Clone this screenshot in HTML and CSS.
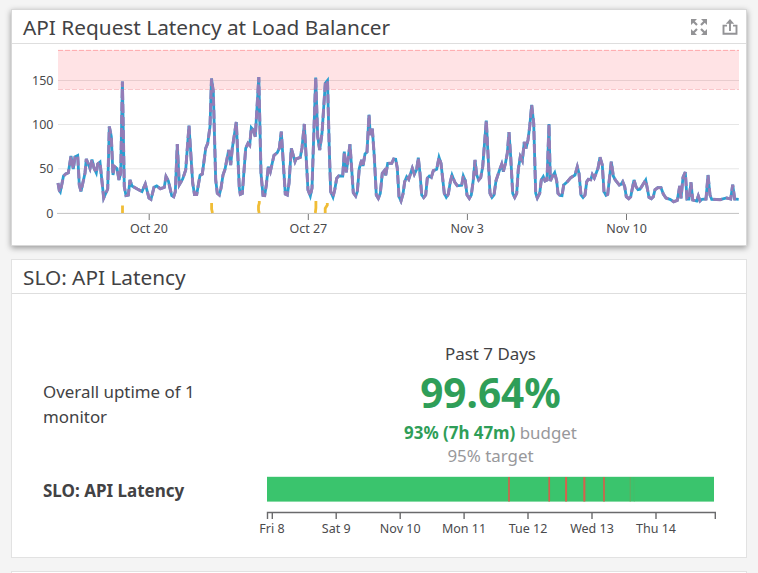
FILE: index.html
```html
<!DOCTYPE html>
<html lang="en">
<head>
<meta charset="utf-8">
<title>API Latency</title>
<link rel="stylesheet" href="styles.css">
</head>
<body>
<main class="board">
  <section class="card card-raised latency">
    <header class="card-head">
      <h2>API Request Latency at Load Balancer</h2>
      <div class="actions">
        <svg class="icon" viewBox="0 0 16 16"><g fill="none" stroke="#939396" stroke-width="2.2"><path d="M2 2L6 6M14 2L10 6M2 14L6 10M14 14L10 10"/></g><path fill="#939396" d="M0 0H6L0 6zM16 0V6L10 0zM0 16V10L6 16zM16 16H10L16 10z"/></svg>
        <svg class="icon" viewBox="0 0 16 16"><path d="M5 6.6H1.5V14.8H14.5V6.6H11M8 12V3" fill="none" stroke="#939396" stroke-width="1.9"/><path d="M8 0L12.2 4.8H3.8z" fill="#939396"/></svg>
      </div>
    </header>
    <svg class="chart" viewBox="12 44 734 201">
      <g class="grid"><path d="M58 80.5H739M58 124.5H739M58 168.8H739"/></g>
      <rect class="band" x="58" y="50" width="681" height="39.5"/>
      <path class="band-edge top" d="M58 50.4H739"/>
      <path class="band-edge" d="M58 89.5H739"/>
      <path class="axis" d="M57 213.4H739"/>
      <path class="tick" d="M149.2 214V220M308.3 214V220M467.4 214V220M626.5 214V220"/>
      <g class="label end"><text x="53.5" y="85">150</text><text x="53.5" y="129">100</text><text x="53.5" y="173">50</text><text x="53.5" y="218">0</text></g>
      <g class="label mid"><text x="149" y="233">Oct 20</text><text x="308.3" y="233">Oct 27</text><text x="467.2" y="233">Nov 3</text><text x="626.5" y="233">Nov 10</text></g>
      <path class="alert" d="M122.5 205.5V213M211.6 203V209L212.5 213M259.3 201V203L258.5 206V210L259.2 213M315.9 201V208L315.3 213M325.2 213V208.5L327.3 205V203"/>
      <defs>
        <polyline id="series" points="58,183 59.3,190.5 60.3,192 63.5,176 65.7,174 68.3,172.7 71,156 73.3,169 75,157 77.7,155.5 79.3,185 81,191.5 85,173 86.3,159 90,168.5 92,159.5 94,168 96.3,173 97.7,164 100,162 102,181.5 103.7,198 107.7,189 109.3,126.5 111.3,136.5 113,175 114.5,166.5 117,168.5 119,180 120.7,173 122.4,81.5 124.3,186.5 126,195.5 128.3,195 130,180 132,186 137.3,189 142,191.5 145.3,184 149,198 151,199.3 154,187.3 156.7,186 160.3,188.7 164.3,187.3 166,176.5 168.3,180.7 171.7,195.5 173.7,196.7 175.3,191.7 177.3,144 179.3,184.7 182.7,179 185.7,170 189,125.5 192.7,183 194.5,194.5 196.7,194.5 200,175.3 202.3,174 205.7,148.3 207.7,143.3 210,126.7 211.5,78.5 213.3,91.7 215.7,180 217.3,193.3 219.3,195 221,188.3 223,175 225,169.3 228.7,150 230.7,165 232.3,148.3 236.3,122 239.3,188 240.3,194.3 242.3,193.5 245.7,148.3 248,143.3 249.7,145.3 251.3,127.7 253.3,130 255.3,136.7 258.8,77 261,173.3 263,195.3 264.7,195.5 266.3,185 268.3,166.7 270.3,171.7 274,155.3 277.3,152.7 279.3,148.3 281.3,131.7 285.3,194 287.3,195 289,183.3 291.3,148.3 295,161.5 296,159 300.3,157.3 302,148 304.3,124 308,190 310.3,196 312,188 315.7,77.5 317.7,136.7 319.7,150 322,133.3 325.3,83.3 327.5,80.5 329.3,150 330.7,191.7 333,197 334.7,190 336.7,178.3 338.7,176 342.7,176 344.3,151.7 346.3,172.3 350,144.3 353.3,192.7 355.7,196 357.3,191.7 359.3,168.3 361.7,160 363,166 365,154 367,152 369,114.7 370.3,135 372.3,128.7 374.3,156.7 376.3,195 378.3,198.3 380.3,193.3 382.3,173.3 384.3,170.7 385.7,175.3 387.7,163.3 391.7,163.3 393.7,159 395.7,159.3 397.3,168.3 399,196.7 401,201 403,194 404.7,181.7 406.7,176.7 408.7,179.3 412.3,168.3 414.3,174.3 416.7,169.3 418.3,157.7 420,173.3 421.7,195 423.7,197.5 425.7,195 427.3,178.3 429.3,176 431.3,177.3 433.3,170.7 436.7,169.3 439,157.3 441,163.3 444.3,193.3 446.3,197.3 448.3,194.3 450.3,181.7 452,175 454.7,182 457.3,185.7 461.7,185.3 463.3,176 465.3,180.7 467,195 469.3,198.4 471.3,195 473.3,180 475,160 476.7,175 478.7,180 480.7,177.7 482.7,166.7 486.3,120.5 488.3,160 490,193.3 492,197.5 494,195 496,180.7 499.3,170.7 501.7,164.3 503.3,171.7 505.3,164 507.3,153.3 509,132 510.7,156.7 512.7,193.3 514.7,197.3 516.7,193.3 518.3,169.3 520.3,156.7 522.3,160.7 524.3,142 526,148.3 528,140 529.7,126.7 531.7,105 533.7,123.3 535.7,193.3 537.3,198 539.7,193.3 541.3,180 543.3,176.7 545,181 547,180 549,124 550.3,181 552.3,176.7 554.7,172.7 556.7,181 558,193.3 560,195.5 562,195.7 563.7,185 567.3,181.7 570.7,177.7 575,175 577.3,166.7 579,173.3 581,195 583,197.5 585,195 586.7,181.7 588.3,179.3 590.7,179.7 592.3,174.7 594.3,178 598,168.3 600,157.3 602.3,165 604,191.7 606,195.3 607.7,194.3 611.3,161.7 613.3,176 615.3,180 619.3,185 621,184.3 622.7,181.7 624.7,186.7 626.3,196.7 628.7,198.7 630.7,196.7 634,180 636,186.7 638,189.7 640,189.3 645.7,180 649,197.3 651.3,198.7 653.3,196.7 655,189.7 657.7,187.7 661,187.7 663.3,194 666,198 670,199.3 673.7,201.7 677.3,200.3 679.7,186 681,198.3 683,177.3 685.3,172 687,199 689,199 691,182.3 692.7,200 696.7,201 698.3,196 700,201 702,199.3 706,199 708,175 710,195 711.7,199.3 720,199.7 726.7,198 730.7,199 732.7,184.7 734.7,199 738.7,199.3"/>
      </defs>
      <use href="#series" class="line line-base"/>
      <use href="#series" class="line line-dash"/>
    </svg>
  </section>

  <section class="card slo">
    <header class="card-head">
      <h2>SLO: API Latency</h2>
    </header>
    <div class="slo-body">
      <p class="overall">Overall uptime of 1 monitor</p>
      <div class="summary">
        <p class="period">Past 7 Days</p>
        <p class="uptime">99.64%</p>
        <p class="budget"><b>93% (7h 47m)</b> budget</p>
        <p class="target">95% target</p>
      </div>
      <p class="name">SLO: API Latency</p>
      <svg class="timeline" viewBox="255 476 465 62">
        <rect x="267" y="476.8" width="447" height="24.8" fill="#3ac46d"/>
        <path d="M509 477V501.5M549.2 477V501.5M604 477V501.5" stroke="#d0624c" stroke-width="1.7"/>
        <path d="M566.1 477V501.5M584.3 477V501.5" stroke="#d6604d" stroke-width="2"/>
        <path d="M630.2 477V501.5" stroke="#6ba55c"/>
        <path d="M634.3 477V501.5" stroke="#48bc68" stroke-width=".7"/>
        <path d="M267.5 519V512.5H715.3V519M272.3 512.5V519M336.2 512.5V519M400.2 512.5V519M464.1 512.5V519M528 512.5V519M592 512.5V519M656 512.5V519" class="scale"/>
        <g class="label mid"><text x="272" y="532.5">Fri 8</text><text x="336.2" y="532.5">Sat 9</text><text x="400.2" y="532.5">Nov 10</text><text x="464" y="532.5">Mon 11</text><text x="528" y="532.5">Tue 12</text><text x="592" y="532.5">Wed 13</text><text x="656" y="532.5">Thu 14</text></g>
      </svg>
    </div>
  </section>

  <section class="card next"></section>
</main>
</body>
</html>
```
FILE: styles.css
```css
* { box-sizing: border-box; }
body {
  margin: 0;
  background: #f4f4f4;
  color: #424244;
  font-family: "Noto Sans", sans-serif;
}
h2, p { margin: 0; }
.board {
  display: flex;
  flex-direction: column;
  gap: 13px;
  height: 573px;
  padding: 9px 11px 0;
}
.card {
  flex: none;
  background: #fff;
  border: 1px solid #e2e2e2;
}
.card-raised {
  border-color: #d8d8d8;
  box-shadow: 0 2px 6px rgba(0, 0, 0, .38);
}
.latency { height: 237px; }
.slo { height: 299px; }
.card.next { flex: 1; border-bottom: 0; }
.card-head {
  display: flex;
  align-items: center;
  justify-content: space-between;
  height: 34px;
  padding: 0 8px 0 11px;
  border-bottom: 1px solid #dedede;
}
.card-head h2 {
  font-size: 20.8px;
  font-weight: 400;
  line-height: 32px;
  white-space: nowrap;
}
.actions { display: flex; gap: 15px; }
.icon { display: block; width: 16px; height: 16px; }
.chart { display: block; width: 734px; height: 201px; }
.grid path { stroke: #e6e6e6; fill: none; }
.band { fill: rgba(255, 0, 15, .11); }
.band-edge { stroke: #f9c7cb; stroke-dasharray: 5 2; }
.band-edge.top { stroke: #ffa9ac; }
.axis { stroke: #c2c2c2; }
.tick { stroke: #777; }
.label { fill: #4a4a4c; font-size: 12.5px; }
.end { text-anchor: end; }
.mid { text-anchor: middle; }
.alert { fill: none; stroke: #f0bd36; stroke-width: 2.8; }
.line { fill: none; stroke-width: 2.8; }
.line-base { stroke: #2b9fd1; }
.line-dash { stroke: #947db7; stroke-width: 3; stroke-dasharray: 9 4; }
.scale { fill: none; stroke: #6a6a6c; stroke-width: 1.4; }
.slo-body {
  display: grid;
  grid-template-columns: 212px 465px;
  grid-template-rows: 134px 62px;
  padding: 48px 0 0 31px;
}
.overall {
  width: 170px;
  padding-top: 37px;
  font-size: 16.9px;
  line-height: 25px;
}
.summary { width: 447px; margin-left: 12px; text-align: center; }
.period { font-size: 16.9px; line-height: 23px; }
.uptime {
  color: #2f9e58;
  font-size: 40.5px;
  font-weight: 700;
  line-height: 56px;
}
.budget, .target { color: #98989b; font-size: 16.9px; line-height: 23px; }
.budget b { color: #2f9e58; }
.name { font-size: 17px; font-weight: 700; line-height: 30px; }
.timeline { display: block; width: 465px; height: 62px; }
```
